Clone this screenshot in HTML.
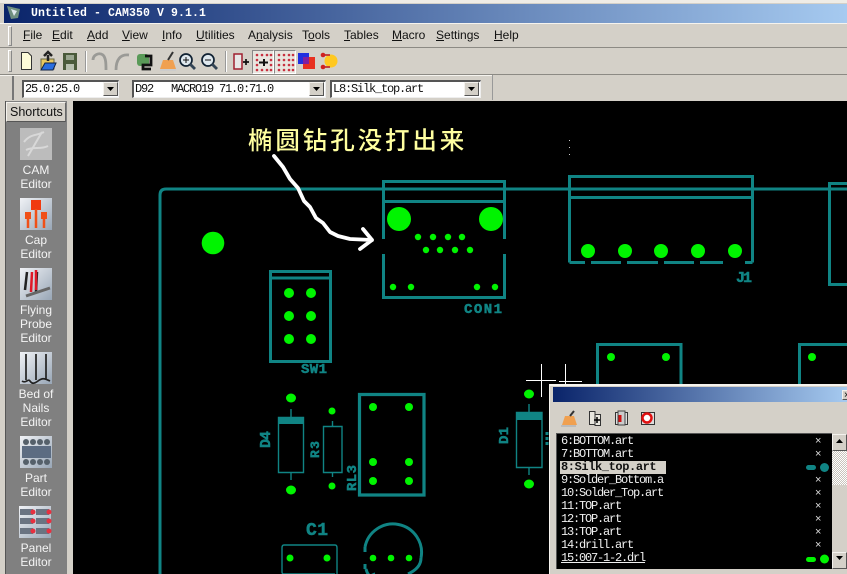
<!DOCTYPE html>
<html><head><meta charset="utf-8">
<style>
html,body{margin:0;padding:0;background:#d4d0c8}
#r{position:relative;width:847px;height:574px;overflow:hidden;background:#d4d0c8;font-family:"Liberation Sans",sans-serif}
#r div{position:absolute;box-sizing:border-box}
#r svg{position:absolute;left:0;top:0}
.m{top:28px;font-size:12px;line-height:14px;color:#111;white-space:nowrap}
.l{left:6px;width:60px;text-align:center;color:#f4f4f4;font-size:12px;line-height:14px}
.c{background:#fff;border-top:2px solid #555;border-left:2px solid #555;border-bottom:1px solid #eee;border-right:1px solid #eee;font:12px/15px "Liberation Mono",monospace;letter-spacing:-1.2px;color:#111;white-space:pre;padding-left:1px}
.b{background:#d4d0c8;border:1px solid;border-color:#f4f2ee #555 #555 #f4f2ee}
.t{left:561px;font:12px/13px "Liberation Mono",monospace;letter-spacing:-1.2px;color:#f0f0f0;white-space:pre}
.x{left:815px;color:#ddd;font:11px/13px "Liberation Sans",sans-serif}
</style></head><body><div id="r">

<div style="left:0;top:0;width:847px;height:3px;background:#efece6"></div>
<div style="left:4px;top:4px;width:843px;height:19px;background:linear-gradient(90deg,#0a246a,#a6caf0)"></div>
<div style="left:31px;top:6px;font:bold 11.5px/15px 'Liberation Mono',monospace;letter-spacing:.1px;color:#fff;white-space:pre">Untitled - CAM350 V 9.1.1</div>
<div style="left:0;top:23px;width:847px;height:1px;background:#f5f3ee"></div>
<div style="left:0;top:47px;width:847px;height:1px;background:#8c8a84"></div>
<div style="left:0;top:74px;width:847px;height:1px;background:#8c8a84"></div>
<div style="left:0;top:75px;width:493px;height:1px;background:#f5f3ee"></div>
<div style="left:492px;top:75px;width:1px;height:25px;background:#999"></div>
<div style="left:8px;top:26px;width:4px;height:20px;border:1px solid;border-color:#fff #888 #888 #fff"></div>
<div style="left:8px;top:50px;width:4px;height:22px;border:1px solid;border-color:#fff #888 #888 #fff"></div>
<div style="left:12px;top:76px;width:2px;height:24px;background:#777"></div>

<div class="m" style="left:23px"><u>F</u>ile</div>
<div class="m" style="left:52px"><u>E</u>dit</div>
<div class="m" style="left:87px"><u>A</u>dd</div>
<div class="m" style="left:122px"><u>V</u>iew</div>
<div class="m" style="left:162px"><u>I</u>nfo</div>
<div class="m" style="left:196px"><u>U</u>tilities</div>
<div class="m" style="left:248px">A<u>n</u>alysis</div>
<div class="m" style="left:302px">T<u>o</u>ols</div>
<div class="m" style="left:344px"><u>T</u>ables</div>
<div class="m" style="left:392px"><u>M</u>acro</div>
<div class="m" style="left:436px"><u>S</u>ettings</div>
<div class="m" style="left:494px"><u>H</u>elp</div>

<div style="left:252px;top:50px;width:22px;height:24px;border:1px solid;border-color:#888 #fff #fff #888;background:#e8e5df"></div>
<div style="left:274px;top:50px;width:22px;height:24px;border:1px solid;border-color:#888 #fff #fff #888;background:#e8e5df"></div>

<svg width="847" height="100" viewBox="0 0 847 100">
<!-- logo -->
<path d="M7 6L20 9L18 18L11 19Z" fill="#6f8f80"/><path d="M11 9L17 11L14 16Z" fill="#dfe8ee"/>
<!-- new -->
<path d="M21.500 52.500H28L31.500 56V69.500H21.500Z" fill="#fdfbd8" stroke="#333"/>
<!-- open -->
<path d="M41 59H54V69H41Z" fill="#e8c860" stroke="#664"/><path d="M41 70L45 63H56L53 70Z" fill="#2a6ee0" stroke="#124"/><path d="M48 61V55M44 56L48 52L52 56" stroke="#222" stroke-width="2.500" fill="none"/>
<!-- save -->
<rect x="63" y="53" width="14" height="17" fill="#4a5a3a"/><rect x="66" y="55" width="8" height="5" fill="#9aa690"/><rect x="66" y="64" width="8" height="6" fill="#b8c0b0"/>
<path d="M85.500 51V72" stroke="#999"/><path d="M86.500 51V72" stroke="#fff"/>
<!-- undo redo -->
<path d="M93 60C93 55 99 52 103 55C106 58 106 64 106 70" fill="none" stroke="#9a9a96" stroke-width="2.800"/>
<path d="M116 70C116 60 120 54 129 55" fill="none" stroke="#9a9a96" stroke-width="2.800"/>
<!-- icon -->
<rect x="137" y="54" width="12" height="12" rx="3" fill="#5a9a58"/><path d="M145 56H151V65H143V69H151" fill="none" stroke="#111" stroke-width="2.800"/>
<!-- broom -->
<path d="M160 69L163 60H173L176 69Z" fill="#f0a050"/><path d="M168 60L173 52" stroke="#333" stroke-width="2"/><path d="M160 70H176" stroke="#ccc" stroke-width="2"/>
<!-- zoom -->
<circle cx="186" cy="60" r="6" fill="#dfe8ee" stroke="#123" stroke-width="1.700"/><path d="M183 60H189M186 57V63" stroke="#111"/><path d="M190 64L195 69" stroke="#345" stroke-width="2.800"/>
<circle cx="208" cy="60" r="6" fill="#dfe8ee" stroke="#123" stroke-width="1.700"/><path d="M205 60H211" stroke="#111"/><path d="M212 64L217 69" stroke="#345" stroke-width="2.800"/>
<path d="M225.500 51V72" stroke="#999"/><path d="M226.500 51V72" stroke="#fff"/>
<!-- red box -->
<rect x="234" y="54" width="8" height="15" fill="#e8e8e8" stroke="#a02030" stroke-width="1.500"/><path d="M243 62H249M246 59V65" stroke="#111" stroke-width="1.700"/>
<g fill="#c83040"><circle cx="257" cy="55" r="1.300"/><circle cx="262" cy="55" r="1.300"/><circle cx="267" cy="55" r="1.300"/><circle cx="271" cy="55" r="1.300"/><circle cx="257" cy="60" r="1.300"/><circle cx="271" cy="60" r="1.300"/><circle cx="257" cy="65" r="1.300"/><circle cx="271" cy="65" r="1.300"/><circle cx="257" cy="70" r="1.300"/><circle cx="262" cy="70" r="1.300"/><circle cx="267" cy="70" r="1.300"/><circle cx="271" cy="70" r="1.300"/>
<circle cx="279" cy="55" r="1.300"/><circle cx="284" cy="55" r="1.300"/><circle cx="289" cy="55" r="1.300"/><circle cx="293" cy="55" r="1.300"/><circle cx="279" cy="60" r="1.300"/><circle cx="284" cy="60" r="1.300"/><circle cx="289" cy="60" r="1.300"/><circle cx="293" cy="60" r="1.300"/><circle cx="279" cy="65" r="1.300"/><circle cx="284" cy="65" r="1.300"/><circle cx="289" cy="65" r="1.300"/><circle cx="293" cy="65" r="1.300"/><circle cx="279" cy="70" r="1.300"/><circle cx="284" cy="70" r="1.300"/><circle cx="289" cy="70" r="1.300"/><circle cx="293" cy="70" r="1.300"/></g>
<path d="M259 62.500H268M264 59V66" stroke="#111" stroke-width="2"/>
<!-- colour -->
<rect x="298" y="53" width="11" height="11" fill="#2030e0"/><rect x="303" y="57" width="12" height="12" fill="#e83020"/><rect x="303" y="57" width="6" height="7" fill="#8020a0"/>
<!-- sun -->
<circle cx="331" cy="61" r="6.500" fill="#ffc820"/><path d="M322 55H330M322 67H330" stroke="#c03030" stroke-width="1.700"/><circle cx="323" cy="55" r="2.300" fill="#d02020"/><circle cx="323" cy="67" r="2.300" fill="#d02020"/>
</svg>

<!-- combos -->
<div class="c" style="left:22px;top:80px;width:97px;height:18px">25.0:25.0</div>
<div class="b" style="left:103px;top:82px;width:15px;height:14px"></div>
<div class="c" style="left:132px;top:80px;width:194px;height:18px">D92   MACRO19 71.0:71.0</div>
<div class="b" style="left:309px;top:82px;width:15px;height:14px"></div>
<div class="c" style="left:330px;top:80px;width:151px;height:18px">L8:Silk_top.art</div>
<div class="b" style="left:464px;top:82px;width:15px;height:14px"></div>
<svg width="847" height="100" viewBox="0 0 847 100"><path d="M107 87H114L110.500 91ZM313 87H320L316.500 91ZM468 87H475L471.500 91Z" fill="#000"/></svg>

<!-- sidebar -->
<div style="left:0;top:100px;width:73px;height:474px;background:#d4d0c8"></div>
<div style="left:5px;top:101px;width:62px;height:473px;background:#808080;border-left:1px solid #555"></div>
<div style="left:6px;top:102px;width:60px;height:20px;background:#d4d0c8;border:1px solid;border-color:#f5f3ee #666 #555 #f5f3ee"><div style="left:3px;top:0;width:53px;height:18px;font-size:12.500px;line-height:18px;overflow:hidden;white-space:nowrap;color:#111">Shortcuts</div></div>
<div style="left:73px;top:101px;width:774px;height:473px;background:#000"></div>

<svg width="73" height="574" viewBox="0 0 73 574">
<defs><linearGradient id="g" x1="0" y1="0" x2="1" y2="1"><stop offset="0" stop-color="#f0f2f6"/><stop offset="1" stop-color="#98a6b6"/></linearGradient></defs>
<rect x="20" y="128" width="32" height="32" fill="#bcbcbc"/><path d="M24 142C30 134 36 136 44 132M28 156L42 132M26 150C34 146 40 150 48 146" stroke="#d8d8d8" stroke-width="2" fill="none"/>
<rect x="20" y="198" width="32" height="32" fill="url(#g)"/><rect x="31" y="200" width="10" height="10" fill="#f03a10"/><rect x="25" y="212" width="6" height="7" fill="#f05018"/><rect x="41" y="212" width="6" height="7" fill="#f05018"/><path d="M36 209V228M28 218V228M44 218V228" stroke="#f05018" stroke-width="2.500"/>
<rect x="20" y="268" width="32" height="32" fill="url(#g)"/><path d="M27 272L25 290M37 272L36 292" stroke="#222" stroke-width="2.500"/><path d="M32 272L31 292M36 270V290" stroke="#e01828" stroke-width="2.500"/><path d="M26 296L50 288" stroke="#666" stroke-width="3"/>
<rect x="20" y="352" width="32" height="32" fill="url(#g)"/><path d="M26 354V380M36 354V380M46 354V380M22 381C26 384 28 378 30 381S34 384 38 381S44 378 50 381" stroke="#222" stroke-width="1.700" fill="none"/>
<rect x="20" y="436" width="32" height="32" fill="url(#g)"/><rect x="22" y="446" width="29" height="12" fill="#5c6c82"/><g fill="#55606a"><circle cx="26" cy="442" r="3"/><circle cx="33" cy="442" r="3"/><circle cx="40" cy="442" r="3"/><circle cx="47" cy="442" r="3"/><circle cx="26" cy="462" r="3"/><circle cx="33" cy="462" r="3"/><circle cx="40" cy="462" r="3"/><circle cx="47" cy="462" r="3"/></g>
<rect x="19" y="506" width="32" height="32" fill="url(#g)"/><g fill="#6a7482"><rect x="20" y="509" width="13" height="6"/><rect x="36" y="509" width="13" height="6"/><rect x="20" y="518" width="13" height="6"/><rect x="36" y="518" width="13" height="6"/><rect x="20" y="528" width="13" height="6"/><rect x="36" y="528" width="13" height="6"/></g><g fill="#e83040"><circle cx="33" cy="512" r="2.500"/><circle cx="49" cy="512" r="2.500"/><circle cx="33" cy="521" r="2.500"/><circle cx="49" cy="521" r="2.500"/><circle cx="33" cy="531" r="2.500"/><circle cx="49" cy="531" r="2.500"/></g>
</svg>
<div class="l" style="top:163px">CAM<br>Editor</div>
<div class="l" style="top:233px">Cap<br>Editor</div>
<div class="l" style="top:303px">Flying<br>Probe<br>Editor</div>
<div class="l" style="top:387px">Bed of<br>Nails<br>Editor</div>
<div class="l" style="top:471px">Part<br>Editor</div>
<div class="l" style="top:541px">Panel<br>Editor</div>

<!-- PCB -->
<svg width="847" height="574" viewBox="0 0 847 574">
<g fill="none" stroke="#108484" stroke-width="3">
<path d="M160 574V195Q160 189 166 189H847"/>
<path d="M383.500 239V181.500H504.500V239M383.500 201.500H504.500M383.500 254V297.500H504.500V254"/>
<path d="M569.500 262.500V176.500H752.500V262.500M569.500 197.500H752.500M569.500 262.500H585M591 262.500H621M627 262.500H658M664 262.500H694M700 262.500H723M745 262.500H752.500"/>
<path d="M847 183.500H829.500V284.500H847"/>
<path d="M270.500 271.500H330.500V361.500H270.500ZM270.500 278H330.500"/>
<path d="M597.500 385V344.500H681V385"/><path d="M847 344.500H799.500V385"/>
<path d="M359.500 394.500H424V495H359.500Z" stroke-width="3.200"/>
<path d="M421 558A28 28 0 1 0 365 547M366 569C369 580 373 574 375 574M408 574Q421 568 421 558M365 547V552M365 564V569"/>
</g>
<g fill="none" stroke="#108484" stroke-width="1.400">
<path d="M278.500 417.500H303.500V472.500H278.500ZM291 409V417M291 472V480"/>
<path d="M323.500 426.500H342V472.500H323.500ZM332.500 421V426M332.500 472V477"/>
<path d="M284 545H335Q337 545 337 548V574M284 545Q282 545 282 548V572Q282 574 284 574H335"/>
<path d="M516.500 412.500H542V467.500H516.500ZM529 404V412M529 467V475"/>
</g>
<rect x="278" y="417" width="26" height="7" fill="#108484"/><rect x="516" y="412" width="26" height="8" fill="#108484"/>
<path d="M547 432V446" stroke="#108484" stroke-width="3" stroke-dasharray="3 2"/>

<g fill="#00f400">
<circle cx="213" cy="243" r="11.300"/><circle cx="399" cy="219" r="12"/><circle cx="491" cy="219" r="12"/>
<circle cx="418" cy="237" r="3.200"/><circle cx="433" cy="237" r="3.200"/><circle cx="448" cy="237" r="3.200"/><circle cx="462" cy="237" r="3.200"/>
<circle cx="426" cy="250" r="3.200"/><circle cx="440" cy="250" r="3.200"/><circle cx="455" cy="250" r="3.200"/><circle cx="470" cy="250" r="3.200"/>
<circle cx="393" cy="287" r="3.200"/><circle cx="411" cy="287" r="3.200"/><circle cx="477" cy="287" r="3.200"/><circle cx="495" cy="287" r="3.200"/>
<circle cx="588" cy="251" r="7"/><circle cx="625" cy="251" r="7"/><circle cx="661" cy="251" r="7"/><circle cx="698" cy="251" r="7"/><circle cx="735" cy="251" r="7"/>
<circle cx="289" cy="293" r="5"/><circle cx="311" cy="293" r="5"/><circle cx="289" cy="316" r="5"/><circle cx="311" cy="316" r="5"/><circle cx="289" cy="339" r="5"/><circle cx="311" cy="339" r="5"/>
<circle cx="611" cy="357" r="4"/><circle cx="666" cy="357" r="4"/><circle cx="812" cy="357" r="4"/>
<ellipse cx="291" cy="398" rx="5" ry="4.500"/><ellipse cx="291" cy="490" rx="5" ry="4.500"/>
<circle cx="332" cy="411" r="3.500"/><circle cx="332" cy="486" r="3.500"/>
<circle cx="373" cy="407" r="4"/><circle cx="409" cy="407" r="4"/><circle cx="373" cy="462" r="4"/><circle cx="409" cy="462" r="4"/><circle cx="373" cy="481" r="4"/><circle cx="409" cy="481" r="4"/>
<circle cx="290" cy="558" r="3.500"/><circle cx="327" cy="558" r="3.500"/>
<circle cx="373" cy="558" r="3.300"/><circle cx="391" cy="558" r="3.300"/><circle cx="409" cy="558" r="3.300"/>
<ellipse cx="529" cy="394" rx="5" ry="4.500"/><ellipse cx="529" cy="484" rx="5" ry="4.500"/>
</g>

<g fill="#108484" stroke="#108484" stroke-width=".5" font-family="Liberation Mono,monospace" font-weight="bold">
<text x="464" y="313" font-size="14" textLength="38">CON1</text>
<text x="736" y="282" font-size="15" textLength="16">J1</text>
<text x="301" y="373" font-size="14" textLength="26">SW1</text>
<text x="306" y="535" font-size="18" textLength="22">C1</text>
<text transform="translate(270,448) rotate(-90)" font-size="15" textLength="17">D4</text>
<text transform="translate(319,458) rotate(-90)" font-size="13" textLength="17">R3</text>
<text transform="translate(356,491) rotate(-90)" font-size="14" textLength="26">RL3</text>
<text transform="translate(508,444) rotate(-90)" font-size="14" textLength="17">D1</text>
</g>

<path d="M274 156L283 167L290 179L298 188L304 201L310 207L316 218L323 223L330 232L338 236L350 239L372 240M363 229L372 240L360 249" fill="none" stroke="#fff" stroke-width="3.800" stroke-linejoin="round" stroke-linecap="round"/>
<text x="248" y="149" font-family="Noto Sans CJK SC,sans-serif" font-weight="500" font-size="24.500" letter-spacing="2.900" fill="#ffffa0">椭圆钻孔没打出来</text>

<path d="M541.500 364V397M526 380.500H556M565.500 364V384M559 381.500H582" stroke="#fff" stroke-width="1"/>
<path d="M569.500 140V155" stroke="#ccc" stroke-dasharray="1 6"/>
</svg>

<!-- floating layer window -->
<div style="left:549px;top:384px;width:298px;height:190px;background:#d4d0c8;border-left:1px solid #f5f3ee;border-top:2px solid #f5f3ee"></div>
<div style="left:553px;top:387px;width:294px;height:15px;background:linear-gradient(90deg,#0a246a,#a6caf0)"></div>
<div class="b" style="left:842px;top:390px;width:12px;height:10px;font:10px/9px 'Liberation Sans',sans-serif;color:#000;padding-left:1px">×</div>
<svg width="847" height="574" viewBox="0 0 847 574" style="z-index:1">
<path d="M562 425L565 416H574L577 425Z" fill="#f0a050"/><path d="M570 416L574 411" stroke="#333" stroke-width="2"/><path d="M561 426H576" stroke="#bbb" stroke-width="2"/>
<path d="M589.500 411.500H595V424.500H589.500ZM595 414.500H600.500V425.500H595Z" fill="#e8e6de" stroke="#333"/><path d="M594 420H600M597 417V423" stroke="#000" stroke-width="1.500"/>
<path d="M615.500 412.500H627.500V424.500H615.500Z" fill="#ddd" stroke="#333"/><rect x="618" y="411" width="7" height="14" fill="#ccc" stroke="#444"/><path d="M620 415V422" stroke="#d01010" stroke-width="3"/>
<path d="M641.500 412.500H654.500V424.500H641.500Z" fill="#ddd" stroke="#333"/><circle cx="647" cy="418" r="4.500" fill="#fff" stroke="#e01010" stroke-width="2.500"/>
</svg>
<div style="left:556px;top:433px;width:276px;height:136px;background:#000;border-top:1px solid #555;border-left:1px solid #555"></div>
<div style="left:560px;top:461px;width:106px;height:13px;background:#d4d0c8"></div>
<div class="t" style="top:435px">6:BOTTOM.art</div>
<div class="t" style="top:448px">7:BOTTOM.art</div>
<div class="t" style="top:461px;color:#111;font-weight:bold;letter-spacing:-.4px;font-size:12px">8:Silk_top.art</div>
<div class="t" style="top:474px">9:Solder_Bottom.a</div>
<div class="t" style="top:487px">10:Solder_Top.art</div>
<div class="t" style="top:500px">11:TOP.art</div>
<div class="t" style="top:513px">12:TOP.art</div>
<div class="t" style="top:526px">13:TOP.art</div>
<div class="t" style="top:539px">14:drill.art</div>
<div class="t" style="top:552px;text-decoration:underline">15:007-1-2.drl</div>
<div class="x" style="top:435px">×</div><div class="x" style="top:448px">×</div><div class="x" style="top:474px">×</div><div class="x" style="top:487px">×</div><div class="x" style="top:500px">×</div><div class="x" style="top:513px">×</div><div class="x" style="top:526px">×</div><div class="x" style="top:539px">×</div>
<svg width="847" height="574" viewBox="0 0 847 574" style="z-index:1">
<rect x="806" y="465" width="10" height="5" rx="2.500" fill="#108484"/><circle cx="824.500" cy="467.500" r="4.500" fill="#108484"/>
<rect x="806" y="557" width="10" height="5" rx="2.500" fill="#00f400"/><circle cx="824.500" cy="559" r="4.500" fill="#00f400"/>
</svg>
<div style="left:832px;top:434px;width:15px;height:135px;background:#d4d0c8"></div>
<div style="left:832px;top:451px;width:15px;height:34px;background:repeating-conic-gradient(#fff 0 25%,#c8c4bc 0 50%) 0 0/2px 2px"></div>
<div class="b" style="left:832px;top:434px;width:15px;height:17px"></div>
<div class="b" style="left:832px;top:552px;width:15px;height:17px"></div>
<svg width="847" height="574" viewBox="0 0 847 574" style="z-index:2"><path d="M836 443H843L839.500 439ZM836 556H843L839.500 560Z" fill="#000"/></svg>
</div></body></html>
